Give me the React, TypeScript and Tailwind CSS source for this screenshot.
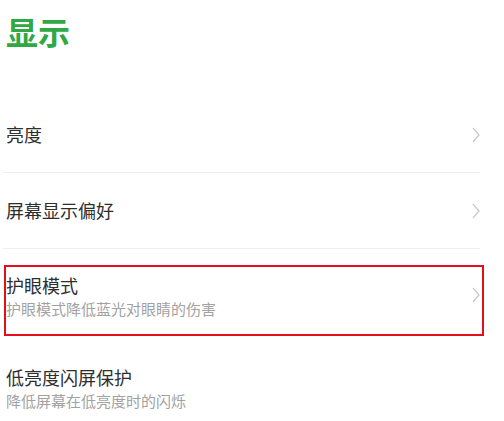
const font = { fontFamily: '"Noto Sans CJK SC", "Noto Sans", sans-serif' };

function Chevron({ className = '' }: { className?: string }) {
  return (
    <svg width="8" height="16" viewBox="0 0 8 16" className={className} fill="none">
      <polyline points="1,1 7,8 1,15" stroke="#c9c9c9" strokeWidth="1.3" />
    </svg>
  );
}

type Row = { title: string };

const rows: Row[] = [{ title: '亮度' }, { title: '屏幕显示偏好' }];

export default function App() {
  return (
    <div className="w-[504px] h-[421px] overflow-hidden bg-white" style={font}>
      <div className="h-[97px] pt-[13px] pl-[6px]">
        <h1 className="text-[32px] leading-[36px] font-bold text-[#2fa845]">显示</h1>
      </div>

      {rows.map((row) => (
        <div
          key={row.title}
          className="ml-[3px] w-[477px] h-[76px] flex items-center justify-between pl-[3px] border-b border-[#efefef]"
        >
          <span className="text-[18px] leading-[25px] text-[#2e2e2e]">{row.title}</span>
          <Chevron />
        </div>
      ))}

      <div className="mt-[16px] ml-[4px] w-[480px] h-[71px] border-2 border-[#e3101c] flex justify-between pr-[2px]">
        <div className="pt-[6px]">
          <div className="text-[18px] leading-[25px] text-[#2e2e2e]">护眼模式</div>
          <div className="text-[15px] leading-[22px] text-[#a2a2a2]">护眼模式降低蓝光对眼睛的伤害</div>
        </div>
        <Chevron className="mt-[20px]" />
      </div>

      <div className="mt-[29px] pl-[6px]">
        <div className="text-[18px] leading-[25px] text-[#2e2e2e]">低亮度闪屏保护</div>
        <div className="text-[15px] leading-[22px] text-[#a2a2a2]">降低屏幕在低亮度时的闪烁</div>
      </div>
    </div>
  );
}
